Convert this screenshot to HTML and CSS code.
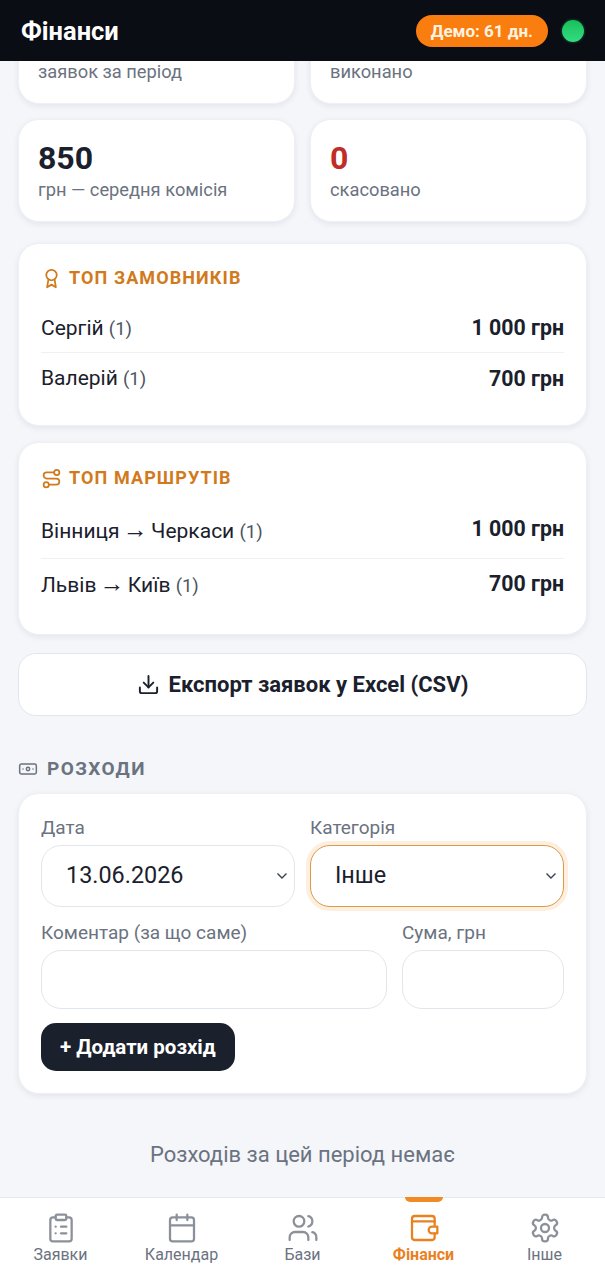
FILE: index.html
```html
<!DOCTYPE html>
<html lang="uk">

<head>
    <meta charset="UTF-8">
    <meta name="viewport" content="width=device-width, initial-scale=1.0">
    <title>Фінанси</title>
    <link rel="stylesheet" href="styles.css">
</head>

<body>
    <header class="topbar">
        <h1 class="topbar-title">Фінанси</h1>
        <span class="demo-badge">Демо: 61 дн.</span>
        <span class="status-dot"></span>
    </header>

    <main class="content">
        <div class="stats">
            <!-- first row is scrolled under the header, only the labels show -->
            <div class="stat stat-cut">
                <div class="stat-label">заявок за період</div>
            </div>
            <div class="stat stat-cut">
                <div class="stat-label">виконано</div>
            </div>
            <div class="stat">
                <div class="stat-value">850</div>
                <div class="stat-label">грн — середня комісія</div>
            </div>
            <div class="stat">
                <div class="stat-value stat-value-red">0</div>
                <div class="stat-label">скасовано</div>
            </div>
        </div>

        <section class="card top-card">
            <h2 class="top-title">
                <svg class="icon-sm" viewBox="0 0 24 24"><circle cx="12" cy="8" r="6"/><path d="M15.477 12.89 17 22l-5-3-5 3 1.523-9.11"/></svg>
                ТОП ЗАМОВНИКІВ
            </h2>
            <div class="top-row">
                <span>Сергій <small>(1)</small></span>
                <b>1 000 грн</b>
            </div>
            <div class="top-row">
                <span>Валерій <small>(1)</small></span>
                <b>700 грн</b>
            </div>
        </section>

        <section class="card top-card top-card-routes">
            <h2 class="top-title">
                <svg class="icon-sm" viewBox="0 0 24 24"><circle cx="6" cy="19" r="3"/><path d="M9 19h8.5a3.5 3.5 0 0 0 0-7h-11a3.5 3.5 0 0 1 0-7H15"/><circle cx="18" cy="5" r="3"/></svg>
                ТОП МАРШРУТІВ
            </h2>
            <div class="top-row top-row-route">
                <span>Вінниця <i class="arrow">→</i> Черкаси <small>(1)</small></span>
                <b>1 000 грн</b>
            </div>
            <div class="top-row top-row-route">
                <span>Львів <i class="arrow">→</i> Київ <small>(1)</small></span>
                <b>700 грн</b>
            </div>
        </section>

        <button class="export-btn">
            <svg class="icon-export" viewBox="0 0 24 24"><path d="M21 15v4a2 2 0 0 1-2 2H5a2 2 0 0 1-2-2v-4"/><polyline points="7 10 12 15 17 10"/><line x1="12" y1="15" x2="12" y2="3"/></svg>
            Експорт заявок у Excel (CSV)
        </button>

        <h2 class="section-title">
            <svg class="icon-section" viewBox="0 0 24 24"><rect x="2" y="6" width="20" height="12" rx="2"/><circle cx="12" cy="12" r="2"/><path d="M6 12h.01M18 12h.01"/></svg>
            РОЗХОДИ
        </h2>

        <form class="card expense-form">
            <div class="form-row">
                <label class="field">
                    <span class="field-label">Дата</span>
                    <select class="control select">
                        <option>13.06.2026</option>
                    </select>
                </label>
                <label class="field">
                    <span class="field-label">Категорія</span>
                    <select class="control select select-focus">
                        <option>Інше</option>
                    </select>
                </label>
            </div>
            <div class="form-row form-row-note">
                <label class="field">
                    <span class="field-label">Коментар (за що саме)</span>
                    <input class="control input" type="text">
                </label>
                <label class="field">
                    <span class="field-label">Сума, грн</span>
                    <input class="control input" type="text">
                </label>
            </div>
            <button class="add-btn" type="button">+ Додати розхід</button>
        </form>

        <p class="empty">Розходів за цей період немає</p>
    </main>

    <nav class="tabbar">
        <a class="tab">
            <svg viewBox="0 0 24 24"><rect x="8" y="2" width="8" height="4" rx="1"/><path d="M16 4h2a2 2 0 0 1 2 2v14a2 2 0 0 1-2 2H6a2 2 0 0 1-2-2V6a2 2 0 0 1 2-2h2"/><path d="M12 11h4M12 16h4M8 11h.01M8 16h.01"/></svg>
            Заявки
        </a>
        <a class="tab">
            <svg viewBox="0 0 24 24"><path d="M8 2v4M16 2v4"/><rect x="3" y="4" width="18" height="18" rx="2"/><path d="M3 10h18"/></svg>
            Календар
        </a>
        <a class="tab">
            <svg viewBox="0 0 24 24"><path d="M16 21v-2a4 4 0 0 0-4-4H6a4 4 0 0 0-4 4v2"/><circle cx="9" cy="7" r="4"/><path d="M22 21v-2a4 4 0 0 0-3-3.87"/><path d="M16 3.13a4 4 0 0 1 0 7.75"/></svg>
            Бази
        </a>
        <a class="tab tab-active">
            <svg viewBox="0 0 24 24"><path d="M20 10V5a2 2 0 0 0-2-2H5a2 2 0 0 0-2 2v14a2 2 0 0 0 2 2h13a2 2 0 0 0 2-2v-3"/><path d="M3 7h17"/><path d="M22 11h-4a2 2 0 0 0 0 5h4z"/></svg>
            Фінанси
        </a>
        <a class="tab">
            <svg viewBox="0 0 24 24"><path d="M12.22 2h-.44a2 2 0 0 0-2 2v.18a2 2 0 0 1-1 1.73l-.43.25a2 2 0 0 1-2 0l-.15-.08a2 2 0 0 0-2.73.73l-.22.38a2 2 0 0 0 .73 2.73l.15.1a2 2 0 0 1 1 1.72v.51a2 2 0 0 1-1 1.74l-.15.09a2 2 0 0 0-.73 2.73l.22.38a2 2 0 0 0 2.73.73l.15-.08a2 2 0 0 1 2 0l.43.25a2 2 0 0 1 1 1.73V20a2 2 0 0 0 2 2h.44a2 2 0 0 0 2-2v-.18a2 2 0 0 1 1-1.73l.43-.25a2 2 0 0 1 2 0l.15.08a2 2 0 0 0 2.73-.73l.22-.39a2 2 0 0 0-.73-2.73l-.15-.08a2 2 0 0 1-1-1.74v-.5a2 2 0 0 1 1-1.74l.15-.09a2 2 0 0 0 .73-2.73l-.22-.38a2 2 0 0 0-2.73-.73l-.15.08a2 2 0 0 1-2 0l-.43-.25a2 2 0 0 1-1-1.73V4a2 2 0 0 0-2-2z"/><circle cx="12" cy="12" r="3"/></svg>
            Інше
        </a>
    </nav>
</body>

</html>
```

FILE: styles.css
```css
* {
    box-sizing: border-box;
}

html,
body {
    height: 1280px;
    overflow: hidden;
}

body {
    margin: 0;
    background-color: #f4f6fa;
    color: #1a202c;
    font-family: Roboto, "Noto Sans", sans-serif;
}

svg {
    fill: none;
    stroke: currentColor;
    stroke-width: 2;
    stroke-linecap: round;
    stroke-linejoin: round;
    flex: none;
}

/* Header lies over the scrolled content */
.topbar {
    position: fixed;
    top: 0;
    left: 0;
    right: 0;
    z-index: 2;
    height: 61px;
    padding: 0 21px;
    background-color: #0a0d14;
    display: flex;
    align-items: center;
}

.topbar-title {
    margin: 0 auto 0 0;
    color: #fff;
    font-size: 25.5px;
    font-weight: 700;
}

.demo-badge {
    height: 32px;
    padding: 0 15px;
    border-radius: 16px;
    background-color: #f97d0f;
    color: #fff3e0;
    font-size: 17px;
    font-weight: 700;
    line-height: 32px;
}

.status-dot {
    width: 22px;
    height: 22px;
    margin-left: 14px;
    border-radius: 50%;
    background: linear-gradient(#18c05a, #34dc82);
    box-shadow: 0 0 3px rgba(34, 197, 94, 0.5);
}

.content {
    padding: 2px 18px 0;
}

.card,
.stat {
    background-color: #fff;
    border: 1px solid #edf0f4;
    box-shadow: 0 2px 6px rgba(20, 30, 50, 0.08);
}

.stats {
    display: grid;
    grid-template-columns: 1fr 1fr;
    gap: 15px;
}

.stat {
    height: 103px;
    padding: 20px 19px 0;
    border-radius: 21px;
}

.stat-cut {
    height: 102px;
    padding-top: 56px;
}

.stat-value {
    font-size: 32px;
    font-weight: 700;
    line-height: 37px;
}

.stat-value-red {
    color: #c02d26;
}

.stat-label {
    margin-top: 2px;
    color: #6b7280;
    font-size: 18.3px;
    line-height: 21px;
}

.card {
    border-radius: 21px;
}

.top-card {
    margin-top: 21px;
    padding: 21px 22px 22px;
}

.top-card + .top-card {
    margin-top: 16px;
}

.top-title {
    margin: 0 0 12px;
    display: flex;
    align-items: center;
    gap: 7px;
    color: #d17a1c;
    font-size: 18px;
    font-weight: 700;
    letter-spacing: 1.1px;
    line-height: 26px;
}

.top-card-routes {
    padding-top: 22px;
    padding-bottom: 21px;
}

.top-card-routes .top-title {
    margin-bottom: 14px;
}

.icon-sm {
    width: 21px;
    height: 21px;
}

.top-row {
    height: 50px;
    display: flex;
    justify-content: space-between;
    align-items: center;
    border-bottom: 1px solid #edf0f4;
    font-size: 21px;
}

.top-row:last-child {
    border-bottom: 0;
}

.top-row small {
    color: #4b5563;
    font-size: 18.5px;
}

.top-row b {
    font-size: 21.3px;
    font-weight: 700;
}

.arrow {
    margin: 0 -2px;
    font-family: "Liberation Sans", sans-serif;
    font-size: 25px;
    font-style: normal;
    line-height: 0;
}

.top-row-route {
    height: 54px;
}

.top-row-route span {
    margin-bottom: 2px;
}

.top-row-route b {
    margin-bottom: 6px;
}

.export-btn {
    width: 100%;
    height: 63px;
    margin-top: 18px;
    display: flex;
    justify-content: center;
    align-items: center;
    gap: 9px;
    background-color: #fff;
    border: 1px solid #e2e6ec;
    border-radius: 18px;
    color: #1a202c;
    font-family: inherit;
    font-size: 22px;
    font-weight: 700;
}

.icon-export {
    width: 23px;
    height: 23px;
}

.section-title {
    margin: 41px 0 12px;
    display: flex;
    align-items: center;
    gap: 9px;
    color: #6b7280;
    font-size: 19px;
    font-weight: 700;
    letter-spacing: 1.4px;
    line-height: 24px;
}

.icon-section {
    width: 20px;
    height: 20px;
    stroke-width: 1.8;
}

.expense-form {
    height: 301px;
    padding: 22px 22px 0;
}

.form-row {
    display: grid;
    grid-template-columns: 1fr 1fr;
    gap: 15px;
}

.form-row-note {
    grid-template-columns: 1fr 162px;
    margin-top: 14px;
}

.field {
    display: block;
    min-width: 0;
}

.field-label {
    display: block;
    margin-bottom: 6px;
    color: #6b7280;
    font-size: 19px;
    line-height: 23px;
}

.control {
    display: block;
    width: 100%;
    background-color: #fff;
    border: 1px solid #e2e6ec;
    border-radius: 20px;
    color: #1a202c;
    font-family: inherit;
    font-size: 23.4px;
    outline: 0;
}

.select {
    height: 62px;
    padding: 0 24px 2px;
    appearance: none;
    background-image: url("data:image/svg+xml,%3Csvg xmlns='http://www.w3.org/2000/svg' width='12' height='8' viewBox='0 0 12 8'%3E%3Cpath d='M1.5 1.5 6 6l4.5-4.5' fill='none' stroke='%23374151' stroke-width='1.4'/%3E%3C/svg%3E");
    background-repeat: no-repeat;
    background-position: right 6px center;
}

.select-focus {
    border-color: #d99a4a;
    box-shadow: 0 0 0 4px #fdeedd;
}

.input {
    height: 59px;
    margin-top: 5px;
    padding: 0 16px;
}

.add-btn {
    height: 48px;
    margin-top: 14px;
    padding: 0 19px;
    background-color: #1a202c;
    border: 0;
    border-radius: 15px;
    color: #fff;
    font-family: inherit;
    font-size: 20.5px;
    font-weight: 700;
}

.empty {
    margin: 48px 0 0;
    color: #6b7280;
    font-size: 22px;
    line-height: 26px;
    text-align: center;
}

/* Bottom navigation lies over the content too */
.tabbar {
    position: fixed;
    left: 0;
    right: 0;
    bottom: 0;
    z-index: 2;
    height: 83px;
    padding-top: 14px;
    background-color: #fff;
    border-top: 1px solid #e6e9ee;
    display: grid;
    grid-template-columns: repeat(5, 1fr);
}

.tab {
    position: relative;
    display: flex;
    flex-direction: column;
    align-items: center;
    color: #6b7280;
    font-size: 16px;
    line-height: 22px;
}

.tab svg {
    width: 32px;
    height: 32px;
    stroke: #8b9099;
    stroke-width: 1.7;
}

.tab-active {
    color: #e9811f;
    font-weight: 700;
}

.tab-active svg {
    stroke: #e9811f;
}

.tab-active::before {
    content: "";
    position: absolute;
    top: -15px;
    left: 50%;
    width: 38px;
    height: 5px;
    margin-left: -19px;
    border-radius: 0 0 5px 5px;
    background-color: #f08a24;
}
```
